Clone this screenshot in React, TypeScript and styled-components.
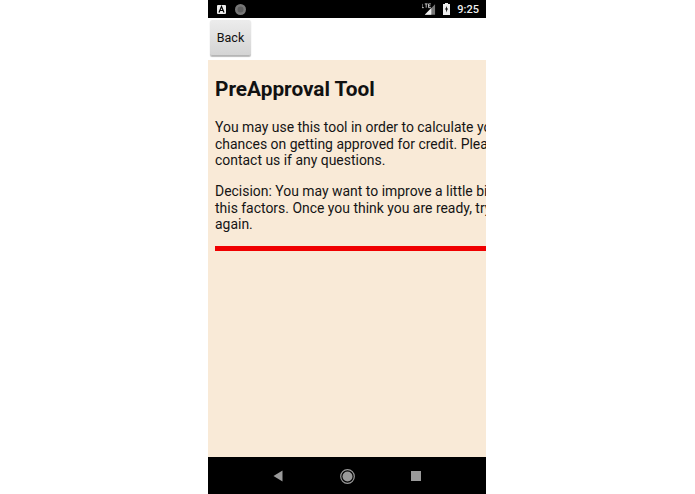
import React from "react";
import styled, { createGlobalStyle } from "styled-components";

const Global = createGlobalStyle`
  html, body { margin: 0; padding: 0; background: #fff; }
  body { font-family: Roboto, "Liberation Sans", sans-serif; }
`;

const Stage = styled.div`
  width: 695px;
  height: 494px;
  display: flex;
  justify-content: center;
  padding-right: 1px;
  box-sizing: border-box;
  background: #fff;
`;

const Phone = styled.div`
  width: 278px;
  height: 494px;
  display: flex;
  flex-direction: column;
  overflow: hidden;
`;

const StatusBar = styled.div`
  height: 18px;
  background: #000;
  display: flex;
  align-items: center;
  padding: 0 7px 0 9px;
  gap: 9px;
  flex: none;
`;

const Spacer = styled.div`
  flex: 1;
`;

const StatusIcons = styled.div`
  display: flex;
  align-items: center;
  gap: 7px;
`;

const Clock = styled.span`
  color: #eee;
  font-size: 11px;
  font-weight: 500;
`;

const TopBar = styled.div`
  height: 42px;
  background: #fff;
  flex: none;
  padding: 2px 0 0 2px;
  box-sizing: border-box;
`;

const BackButton = styled.button`
  width: 41px;
  height: 36px;
  padding: 0;
  border: none;
  border-bottom: 1px solid #b5b5b5;
  border-radius: 2px;
  background: linear-gradient(#ececec, #d4d4d4);
  box-shadow: 0 1px 1px #bbb;
  color: #111;
  font-family: Roboto, sans-serif;
  font-size: 12.5px;
`;

const Content = styled.div`
  flex: 1;
  background: #f9ead7;
  padding: 17px 0 0 7px;
  overflow: hidden;
`;

const Title = styled.h1`
  margin: 0 0 17px;
  font-size: 20.8px;
  line-height: 25px;
  font-weight: 700;
  color: #111;
  white-space: nowrap;
`;

const Paragraph = styled.p`
  margin: 0 0 14.5px;
  font-size: 13.95px;
  line-height: 16.5px;
  color: #151515;
  white-space: nowrap;
`;

const RedBar = styled.div`
  height: 5px;
  width: 300px;
  margin-top: -1px;
  background: #f00000;
`;

const NavBar = styled.div`
  height: 37px;
  background: #000;
  flex: none;
  display: flex;
  align-items: center;
  justify-content: center;
  gap: 56.5px;
  padding-top: 1px;
  box-sizing: border-box;
`;

export default function App() {
  return (
    <Stage>
      <Global />
      <Phone>
        <StatusBar>
          <svg width="9" height="9" viewBox="0 0 9 9">
            <rect width="9" height="9" rx="1" fill="#eee" />
            <path d="M2 7.5 4.5 1.5 7 7.5M3 5.5H6" stroke="#000" strokeWidth="1.2" fill="none" />
          </svg>
          <svg width="11" height="11" viewBox="0 0 11 11">
            <circle cx="5.5" cy="5.5" r="5.5" fill="#777" />
            <circle cx="5.5" cy="5.5" r="3" fill="#5e5e5e" />
          </svg>
          <Spacer />
          <StatusIcons>
            <svg width="14" height="13" viewBox="0 0 15 13">
              <path d="M14 1V12H3Z" fill="#777" />
              <path d="M10 5V12H3Z" fill="#eee" />
              <path d="M0 0.5V4.5H2M3 0.5H6M4.5 0.5V4.5M7 0.5V4.5H9.5M7 2.5H9M7 0.5H9.5" stroke="#ddd" strokeWidth="0.9" fill="none" />
            </svg>
            <svg width="7" height="12" viewBox="0 0 7 12">
              <path d="M2 0H5V1H7V12H0V1H2Z" fill="#eee" />
              <path d="M4 3 2 6.5H3.2L3 9.5 5 5.5H3.8Z" fill="#000" />
            </svg>
            <Clock>9:25</Clock>
          </StatusIcons>
        </StatusBar>
        <TopBar>
          <BackButton>Back</BackButton>
        </TopBar>
        <Content>
          <Title>PreApproval Tool</Title>
          <Paragraph>
            You may use this tool in order to calculate your
            <br />
            chances on getting approved for credit. Please
            <br />
            contact us if any questions.
          </Paragraph>
          <Paragraph>
            Decision: You may want to improve a little bit
            <br />
            this factors. Once you think you are ready, try
            <br />
            again.
          </Paragraph>
          <RedBar />
        </Content>
        <NavBar>
          <svg width="10" height="12" viewBox="0 0 10 12">
            <path d="M9.5 0.5V11.5L0.5 6Z" fill="#9a9a9a" />
          </svg>
          <svg width="15" height="15" viewBox="0 0 15 15">
            <circle cx="7.5" cy="7.5" r="6.8" fill="none" stroke="#9a9a9a" strokeWidth="1.2" />
            <circle cx="7.5" cy="7.5" r="5" fill="#9a9a9a" />
          </svg>
          <svg width="10" height="10" viewBox="0 0 10 10">
            <rect width="10" height="10" fill="#9a9a9a" />
          </svg>
        </NavBar>
      </Phone>
    </Stage>
  );
}
